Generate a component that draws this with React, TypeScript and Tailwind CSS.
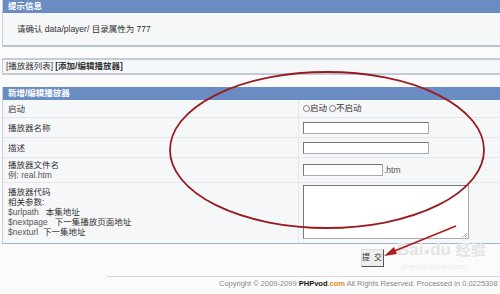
import React from 'react'

const font = "font-['Liberation_Sans','Noto_Sans_CJK_SC',sans-serif]"

const Row = ({ left, right, h }: { left: React.ReactNode; right?: React.ReactNode; h: string }) => (
  <div className={`flex border-b border-[#e3e7eb] ${h}`}>
    <div className="w-[296px] border-r border-[#e3e7eb] pl-[5px] flex flex-col justify-center leading-[10px]">{left}</div>
    <div className="flex-1 pl-[4px] flex items-center">{right}</div>
  </div>
)

const inputCls = 'h-[12px] bg-white border border-[#aaa] border-t-[#777] border-l-[#777]'

export default function App() {
  return (
    <div className={`relative w-[500px] h-[294px] overflow-hidden bg-[#fbfbfb] text-[8.5px] text-[#333] ${font}`}>
      {/* notice */}
      <div className="ml-[2px] border-l border-[#c3cfdc]">
        <div className="h-[13px] bg-[#6a8cc3] text-white font-bold pl-[5px] leading-[13px]">提示信息</div>
        <div className="h-[34px] bg-[#f6f7f9] flex items-center pl-[14px] border-b-2 border-[#b7c4d1]">
          请确认 data/player/ 目录属性为 777
        </div>
      </div>

      <div className="ml-[2px] mt-[11px] h-[17px] border-y-2 border-[#c1ccd7] border-l bg-[#f6f7f9] flex items-center pl-[3px]">
        <span>[播放器列表]</span>
        <span className="ml-[2px] font-bold">[添加/编辑播放器]</span>
      </div>

      {/* form */}
      <div className="ml-[2px] mt-[12px] border-l border-[#c3cfdc] bg-[#f6f7f9] border-b border-b-[#9fb6cc]">
        <div className="h-[13px] bg-[#6a8cc3] text-white font-bold pl-[5px] leading-[13px]">新增/编辑播放器</div>
        <Row
          h="h-[18px]"
          left="启动"
          right={
            <div className="flex items-center">
              <span className="w-[7px] h-[7px] rounded-full border border-[#777] bg-white" />启动
              <span className="ml-[2px] w-[7px] h-[7px] rounded-full border border-[#777] bg-white" />不启动
            </div>
          }
        />
        <Row h="h-[20px]" left="播放器名称" right={<div className={`w-[126px] ${inputCls}`} />} />
        <Row h="h-[20px]" left="描述" right={<div className={`w-[126px] ${inputCls}`} />} />
        <Row
          h="h-[25px]"
          left={<><span>播放器文件名</span><span className="text-[#555]">例: real.htm</span></>}
          right={
            <div className="flex items-center">
              <div className={`w-[80px] ${inputCls}`} />
              <span className="ml-[1px] text-[#555]">.htm</span>
            </div>
          }
        />
        <div className="flex h-[60px]">
          <div className="w-[296px] border-r border-[#e3e7eb] pl-[5px] pt-[4px] leading-[10px] flex flex-col">
            <span>播放器代码</span>
            <span>相关参数:</span>
            <span><span className="text-[#555]">$urlpath</span>&nbsp;&nbsp; 本集地址</span>
            <span><span className="text-[#555]">$nextpage</span>&nbsp;&nbsp; 下一集播放页面地址</span>
            <span><span className="text-[#555]">$nexturl</span>&nbsp;&nbsp;下一集地址</span>
          </div>
          <div className="flex-1 pl-[4px] pt-[2px]">
            <div className="relative w-[166px] h-[54px] bg-white border border-[#aaa] border-t-[#777] border-l-[#777]">
              <svg className="absolute right-[1px] bottom-[1px]" width="5" height="5" viewBox="0 0 5 5">
                <path d="M1 5 L5 1 M3 5 L5 3" stroke="#999" strokeWidth="0.8" />
              </svg>
            </div>
          </div>
        </div>
      </div>

      <div className="ml-[361px] mt-[5px] w-[23px] h-[18px] border border-[#555] border-t-[#ddd] border-l-[#ddd] bg-[#eeeeee] flex items-center justify-center whitespace-nowrap text-[8px] leading-[10px] tracking-[1px]">
        提 交
      </div>

      <div className="ml-[107px] mt-[9px] border-t border-[#d6d9dc] pt-[1px] pl-[112px] whitespace-nowrap text-[7.5px] text-[#888]">
        Copyright © 2009-2099 <b className="text-[#111]">PHPvod</b><b className="text-[#e38a1a]">.com</b> All Rights Reserved. Processed in 0.0225308 sec
      </div>

      {/* baidu watermark */}
      <div className="absolute left-[397px] top-[240px] whitespace-nowrap text-[#e4e4e4] font-bold text-[17px] leading-[18px] font-['Liberation_Sans',sans-serif]">
        Bai<span className="text-[11px]">●</span>du <span className="font-['Noto_Sans_CJK_SC',sans-serif] text-[15px]">经验</span>
      </div>
      <div className="absolute left-[402px] top-[261px] whitespace-nowrap text-[#ececec] text-[8px]">jingyan.baidu.com</div>

      {/* annotation */}
      <svg className="absolute inset-0 pointer-events-none" width="500" height="294" viewBox="0 0 500 294">
        <ellipse cx="327" cy="150" rx="157" ry="78" fill="none" stroke="#9a1b1f" strokeWidth="1.8" />
        <line x1="456" y1="226" x2="392" y2="252" stroke="#b01d20" strokeWidth="1.8" />
        <polygon points="384,256 394,247 397,254" fill="#b01d20" />
      </svg>
    </div>
  )
}
